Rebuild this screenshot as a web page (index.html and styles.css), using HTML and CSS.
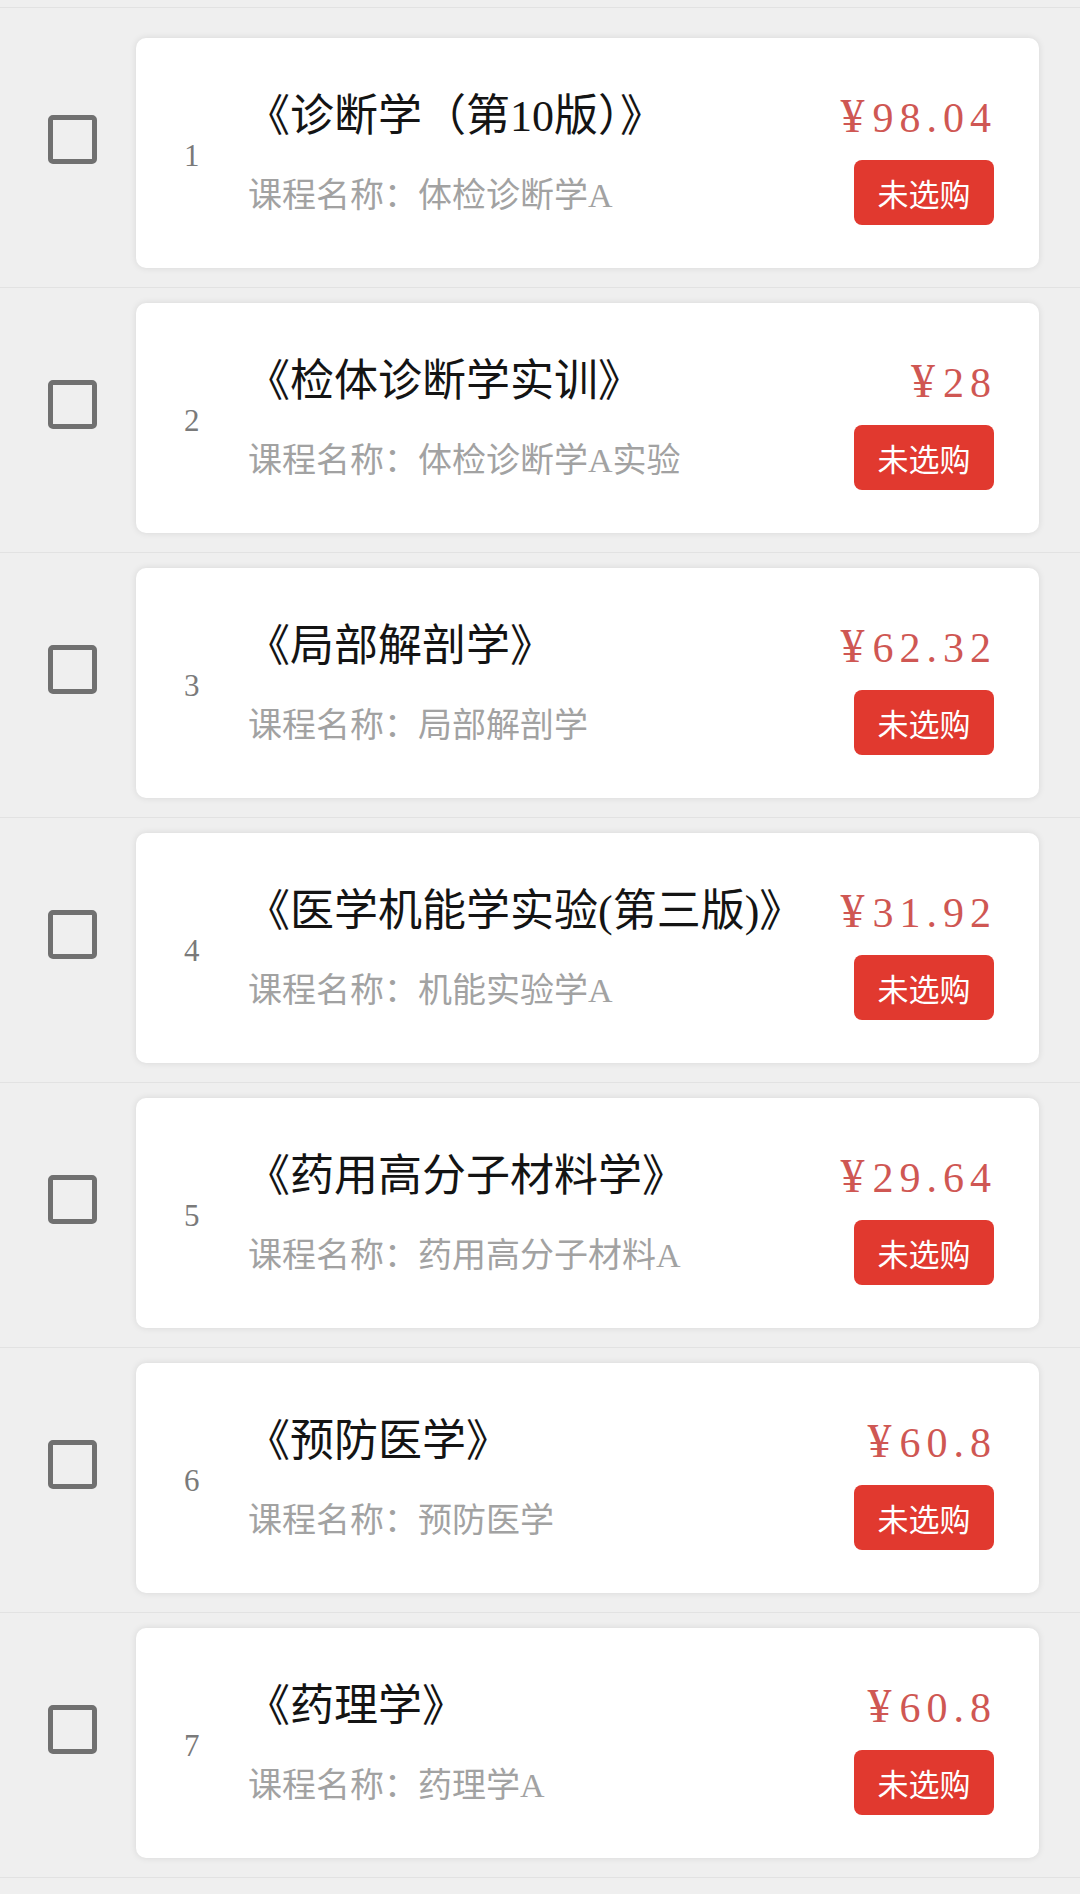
FILE: index.html
```html
<!DOCTYPE html>
<html lang="zh-CN">
<head>
<meta charset="utf-8">
<title>教材选购</title>
<link rel="stylesheet" href="styles.css">
</head>
<body>
<div class="list">
  <div class="row">
    <span class="check"></span>
    <div class="card">
      <div class="num">1</div>
      <div class="info">
        <div class="title">《诊断学（第10版）》</div>
        <div class="sub">课程名称：体检诊断学A</div>
      </div>
      <div class="side">
        <div class="price"><span class="yen">¥</span>98.04</div>
        <div class="btn">未选购</div>
      </div>
    </div>
  </div>
  <div class="row">
    <span class="check"></span>
    <div class="card">
      <div class="num">2</div>
      <div class="info">
        <div class="title">《检体诊断学实训》</div>
        <div class="sub">课程名称：体检诊断学A实验</div>
      </div>
      <div class="side">
        <div class="price"><span class="yen">¥</span>28</div>
        <div class="btn">未选购</div>
      </div>
    </div>
  </div>
  <div class="row">
    <span class="check"></span>
    <div class="card">
      <div class="num">3</div>
      <div class="info">
        <div class="title">《局部解剖学》</div>
        <div class="sub">课程名称：局部解剖学</div>
      </div>
      <div class="side">
        <div class="price"><span class="yen">¥</span>62.32</div>
        <div class="btn">未选购</div>
      </div>
    </div>
  </div>
  <div class="row">
    <span class="check"></span>
    <div class="card">
      <div class="num">4</div>
      <div class="info">
        <div class="title">《医学机能学实验(第三版)》</div>
        <div class="sub">课程名称：机能实验学A</div>
      </div>
      <div class="side">
        <div class="price"><span class="yen">¥</span>31.92</div>
        <div class="btn">未选购</div>
      </div>
    </div>
  </div>
  <div class="row">
    <span class="check"></span>
    <div class="card">
      <div class="num">5</div>
      <div class="info">
        <div class="title">《药用高分子材料学》</div>
        <div class="sub">课程名称：药用高分子材料A</div>
      </div>
      <div class="side">
        <div class="price"><span class="yen">¥</span>29.64</div>
        <div class="btn">未选购</div>
      </div>
    </div>
  </div>
  <div class="row">
    <span class="check"></span>
    <div class="card">
      <div class="num">6</div>
      <div class="info">
        <div class="title">《预防医学》</div>
        <div class="sub">课程名称：预防医学</div>
      </div>
      <div class="side">
        <div class="price"><span class="yen">¥</span>60.8</div>
        <div class="btn">未选购</div>
      </div>
    </div>
  </div>
  <div class="row">
    <span class="check"></span>
    <div class="card">
      <div class="num">7</div>
      <div class="info">
        <div class="title">《药理学》</div>
        <div class="sub">课程名称：药理学A</div>
      </div>
      <div class="side">
        <div class="price"><span class="yen">¥</span>60.8</div>
        <div class="btn">未选购</div>
      </div>
    </div>
  </div>
</div>
</body>
</html>
```
FILE: styles.css
```css
html, body {
  margin: 0;
  padding: 0;
  background: #efefef;
}
body {
  font-family: "Liberation Serif", "Noto Sans CJK SC", serif;
  width: 1080px;
  height: 1894px;
  overflow: hidden;
}
.list {
  margin-top: 7px;
  border-top: 1px solid #e2e2e2;
}
.row {
  display: flex;
  align-items: flex-start;
  gap: 39px;
  padding: 15px 41px 19px 48px;
  border-bottom: 1px solid #e2e2e2;
}
.row:first-child {
  padding-top: 30px;
}
.check {
  flex: 0 0 auto;
  box-sizing: border-box;
  width: 49px;
  height: 49px;
  margin-top: 77px;
  border: 5px solid #707070;
  border-radius: 5px;
}
.card {
  flex: 1 1 auto;
  height: 230px;
  box-sizing: border-box;
  background: #fff;
  border-radius: 10px;
  box-shadow: 0 0 7px rgba(0, 0, 0, 0.10);
  display: grid;
  grid-template-columns: 64px 1fr auto;
  padding: 0 45px 0 48px;
}
.num {
  align-self: center;
  padding-top: 6px;
  font-size: 31px;
  color: #7a7a7a;
}
.info {
  padding-top: 51px;
  display: flex;
  flex-direction: column;
  gap: 29px;
  min-width: 0;
}
.title {
  font-size: 44px;
  line-height: 56px;
  color: #141414;
  margin-left: -2px;
  white-space: nowrap;
}
.sub {
  font-size: 34px;
  line-height: 44px;
  color: #a2a2a2;
  white-space: nowrap;
}
.side {
  padding-top: 50px;
  display: flex;
  flex-direction: column;
  align-items: flex-end;
}
.price {
  font-size: 42px;
  line-height: 56px;
  color: #cf5753;
  letter-spacing: 6px;
  margin-right: -3px;
  white-space: nowrap;
}
.yen {
  font-size: 48px;
  letter-spacing: 8px;
}
.btn {
  margin-top: 14px;
  width: 140px;
  height: 65px;
  box-sizing: border-box;
  background: #e1392f;
  border-radius: 8px;
  color: #fff;
  font-family: "Noto Sans CJK SC", sans-serif;
  font-size: 31px;
  line-height: 65px;
  text-align: center;
}
```
